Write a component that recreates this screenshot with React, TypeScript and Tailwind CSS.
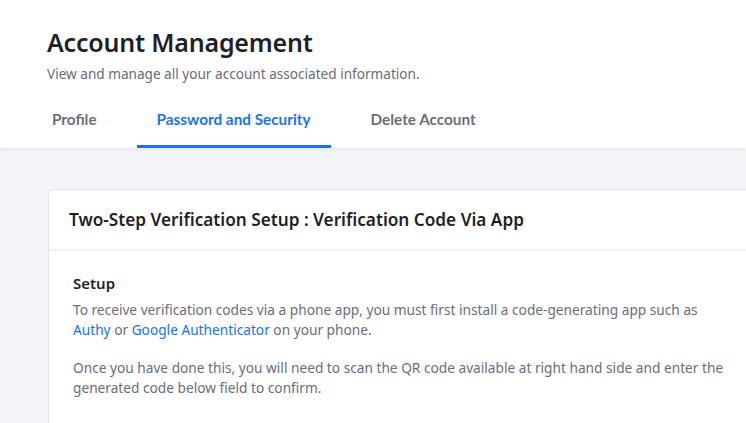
import { useState } from "react";

const TABS = [
  { id: "profile", title: "Profile" },
  { id: "security", title: "Password and Security" },
  { id: "delete", title: "Delete Account" },
];

const AccountManagement = () => {
  const [activeTab, setActiveTab] = useState("security");

  return (
    <main className="min-h-screen bg-[#f3f5f8] font-['Lato',sans-serif]">
      <header className="bg-white shadow-[0_2px_4px_rgba(0,0,0,0.06)]">
        <div className="pl-[47px] pt-[26px]">
          <h1 className="text-[25px] leading-[32px] font-semibold text-[#1f1f29] font-['Noto_Sans',sans-serif] tracking-[-0.2px]">
            Account Management
          </h1>
          <p className="mt-[7px] text-[13.6px] leading-[18px] text-[#6b6b76] font-['Noto_Sans',sans-serif]">
            View and manage all your account associated information.
          </p>
        </div>
        <nav className="flex gap-5 pl-8 mt-[9px]">
          {TABS.map((tab) => (
            <button
              key={tab.id}
              onClick={() => setActiveTab(tab.id)}
              className={`px-5 h-[56px] pt-[2px] text-[15.3px] font-bold border-b-[3px] font-['Lato',sans-serif] ${
                activeTab === tab.id
                  ? "text-[#1a73e8] border-[#1a73e8]"
                  : "text-[#6b6f7a] border-transparent"
              }`}
            >
              {tab.title}
            </button>
          ))}
        </nav>
      </header>

      <section className="pl-12 pt-[41px]">
        <div className="bg-white border border-[#e2e4e8] rounded-tl-[5px] border-r-0">
          <div className="px-5 h-[61px] flex items-center border-b-2 border-[#e9f2fb]">
            <h2 className="text-[17.2px] font-semibold text-[#1f1f29] font-['Noto_Sans',sans-serif]">
              Two-Step Verification Setup : Verification Code Via App
            </h2>
          </div>
          <div className="pl-6 pr-4 pt-[22px] pb-8 font-['Noto_Sans',sans-serif]">
            <h3 className="text-[15px] font-semibold text-[#1f1f29] leading-[20px]">Setup</h3>
            <p className="mt-[7px] text-[13.7px] leading-[20px] text-[#696e7b]">
              To receive verification codes via a phone app, you must first install a
              code-generating app such as{" "}
              <a className="text-[#1a73e8]">Authy</a> or{" "}
              <a className="text-[#1a73e8]">Google Authenticator</a> on your phone.
            </p>
            <p className="mt-[18px] text-[13.7px] leading-[20px] text-[#696e7b]">
              Once you have done this, you will need to scan the QR code available at right hand
              side and enter the generated code below field to confirm.
            </p>
          </div>
        </div>
      </section>
    </main>
  );
};

export default function App() {
  return <AccountManagement />;
}
